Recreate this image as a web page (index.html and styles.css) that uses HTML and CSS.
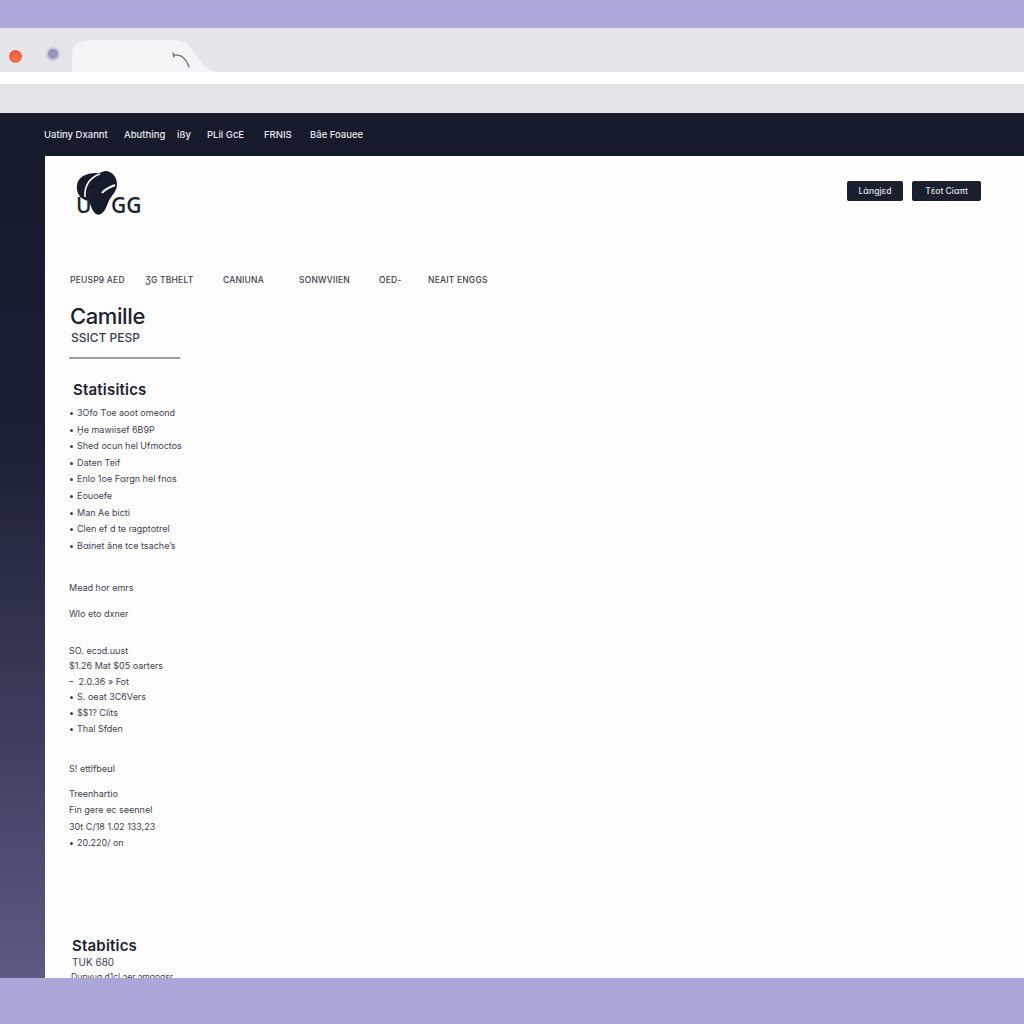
FILE: index.html
```html
<!DOCTYPE html>
<html>
	<head>
		<meta charset="utf-8">
		<title>Camille</title>
		<link rel="stylesheet" href="styles.css">
	</head>
	<body>
		<div class="band-top"></div>

		<div class="tab-bar">
			<span class="dot-red"></span>
			<span class="dot-gray"></span>
			<svg class="tab" width="150" height="32" viewBox="0 0 150 32">
				<path d="M0 32 V16 Q0 0 18 0 H104 Q112 0 118 7 L131 24 Q137 31 146 32 Z" fill="#f5f5f8"/>
				<path d="M101 13 L102 17 M102 15 Q113 14 117 27" fill="none" stroke="#6f6f78" stroke-width="1.3" stroke-linecap="round"/>
			</svg>
		</div>
		<div class="strip"></div>
		<div class="address-bar"></div>

		<div class="app">
			<div class="topbar">
				<span class="top-link w1">Uatiny Dxannt</span>
				<span class="top-link w2">Abuthing</span>
				<span class="top-link w3">ißy</span>
				<span class="top-link w4">PLil GcE</span>
				<span class="top-link w5">FRNIS</span>
				<span class="top-link w6">Bâe Foauee</span>
			</div>
			<div class="app-body">
				<div class="rail"></div>
				<div class="panel">
					<div class="head-row">
						<svg class="logo" width="76" height="54" viewBox="0 0 76 54">
							<path d="M24 43 C20 41 20 35 16 30 C8 28 4 22 5 14 C6 6 14 2 24 2 C27 3 29 1 33 0 C40 0 45 6 45 13 C45 20 40 24 38 28 C35 32 35 38 30 42 C28 44 26 44 24 43 Z" fill="#161b2b"/>
							<path d="M13 26 C12 15 18 6 28 3" fill="none" stroke="#fff" stroke-width="1.6"/>
							<path d="M30 22 C33 18 38 16 43 14" fill="none" stroke="#fff" stroke-width="2"/>
							<text x="4" y="42" class="logo-text">U</text>
							<text x="39" y="42" class="logo-text">GG</text>
						</svg>
						<div class="head-btns">
							<span class="btn btn-a">Lάnɡjεd</span>
							<span class="btn btn-b">Tέοt Ciαπt</span>
						</div>
					</div>

					<div class="subnav">
						<span class="sub-link s1">PEUSP9 AED</span>
						<span class="sub-link s2">ƷG TBHELT</span>
						<span class="sub-link s3">CANIUNA</span>
						<span class="sub-link s4">SONWVIIEN</span>
						<span class="sub-link s5">OED-</span>
						<span class="sub-link s6">NEAIT ENGGS</span>
					</div>

					<h1 class="name">Camille</h1>
					<div class="name-sub">SSICT PESP</div>
					<div class="rule"></div>

					<h2 class="section-title">Statisitics</h2>
					<ul class="stat-list">
						<li>3Ofo Tᴏe aoot omeond</li>
						<li>Ḫe mawiisef 6B9P</li>
						<li>Shed ocun hel Ufmoctos</li>
						<li>Daten Tɐif</li>
						<li>Enlo 1oe Fαrgn hel fnos</li>
						<li>Eouoefe</li>
						<li>Man Ae bicti</li>
						<li>Clen ef d te ɾagptotrel</li>
						<li>Bαinet &#226;ne tce tsacheʼs</li>
					</ul>

					<p class="plain g1">Mead hor emrs</p>
					<p class="plain g2">Wlo eto dxner</p>

					<div class="plain-block g3">
						<p class="plain">SO. ecɔd.uust</p>
						<p class="plain">$1.26 Mat $05 oarters</p>
						<p class="plain">–&nbsp; 2.0.36 » Fot</p>
						<p class="plain dotted">S. oeat 3C6Vers</p>
						<p class="plain dotted">$$1? Clits</p>
						<p class="plain dotted">Thal Sfden</p>
					</div>

					<p class="plain g4">S! ettlfbeʊl</p>

					<div class="plain-block g5">
						<p class="plain">Treenhartio</p>
						<p class="plain">Fin gere ec seennel</p>
						<p class="plain">30t C/18 1.02 133,23</p>
						<p class="plain dotted">20.220/ on</p>
					</div>

					<h2 class="section-title bottom-title">Stabitics</h2>
					<p class="plain tuk">TUK 680</p>
					<p class="plain cut">Dupvuɑ d1cl ɔer ɔmɑoɑsr</p>
				</div>
			</div>
		</div>

		<div class="band-bottom"></div>
	</body>
</html>
```
FILE: styles.css
```css
html, body
{
	margin: 0px;
	padding: 0px;
	height: 1024px;
	overflow: hidden;
	background-color: #a9a9d7;
	font-family: Inter, "Open Sans", "Liberation Sans", sans-serif;
}

.band-top
{
	height: 28px;
	background-color: #abaadb;
}

.band-bottom
{
	height: 46px;
	background-color: #a9a8d8;
}

.tab-bar
{
	display: flex;
	align-items: flex-end;
	height: 44px;
	background-color: #e6e6ea;
}

.dot-red
{
	width: 13px;
	height: 13px;
	margin: 0px 0px 9px 9px;
	border-radius: 50%;
	background: radial-gradient(circle at 50% 70%, #fb7a3c, #ee4b3f);
}

.dot-gray
{
	width: 10px;
	height: 10px;
	margin: 0px 0px 11px 24px;
	border: 2px solid #c9c9dd;
	border-radius: 50%;
	background-color: #9695bd;
}

.tab
{
	display: block;
	margin-left: 12px;
}

.strip
{
	height: 12px;
	background-color: #ffffff;
}

.address-bar
{
	height: 29px;
	background-color: #e5e5e9;
}

.app
{
	height: 865px;
	overflow: hidden;
	display: flex;
	flex-direction: column;
}

.topbar
{
	display: flex;
	align-items: center;
	height: 43px;
	padding-left: 44px;
	background-color: #161b2b;
	flex-shrink: 0;
}

.top-link
{
	color: #e6e7ec;
	font-size: 9.5px;
	font-weight: 500;
	white-space: nowrap;
}

.w1 { width: 80px; }
.w2 { width: 53px; }
.w3 { width: 30px; }
.w4 { width: 57px; }
.w5 { width: 46px; }

.app-body
{
	display: flex;
	flex: 1;
	min-height: 0;
}

.rail
{
	width: 45px;
	flex-shrink: 0;
	background: linear-gradient(180deg, #151a2b 0%, #1c2035 35%, #3d3e5e 70%, #5b5b83 100%);
}

.panel
{
	flex: 1;
	padding-left: 24px;
	background-color: #fdfdfe;
	overflow: hidden;
}

.head-row
{
	display: flex;
	justify-content: space-between;
	height: 117px;
}

.logo
{
	display: block;
	margin: 15px 0px 0px 3px;
}

.logo-text
{
	font-family: "Open Sans", "Liberation Sans", sans-serif;
	font-size: 21px;
	font-weight: 600;
	fill: #1f2433;
}

.head-btns
{
	display: flex;
	gap: 9px;
	margin: 25px 43px 0px 0px;
}

.btn
{
	display: flex;
	align-items: center;
	justify-content: center;
	height: 20px;
	border-radius: 2px;
	background-color: #1a1f2e;
	color: #dfe0e6;
	font-size: 8.5px;
	font-weight: 500;
}

.btn-a { width: 56px; }
.btn-b { width: 69px; }

.subnav
{
	display: flex;
	align-items: center;
	height: 14px;
	padding-left: 1px;
}

.sub-link
{
	color: #3c404c;
	font-size: 8.5px;
	font-weight: 500;
	letter-spacing: 0.2px;
	white-space: nowrap;
}

.s1 { width: 75px; }
.s2 { width: 78px; }
.s3 { width: 76px; }
.s4 { width: 80px; }
.s5 { width: 49px; }

.name
{
	margin: 16px 0px 0px 1px;
	color: #1d2130;
	font-size: 22px;
	font-weight: 500;
	line-height: 26px;
	letter-spacing: -0.4px;
}

.name-sub
{
	margin: 2px 0px 0px 2px;
	color: #3c404c;
	font-size: 12px;
	font-weight: 500;
	line-height: 14px;
}

.rule
{
	width: 111px;
	height: 2px;
	margin-top: 12px;
	background-color: #9c9ca8;
}

.section-title
{
	margin: 21px 0px 0px 4px;
	color: #1d2130;
	font-size: 15px;
	font-weight: 600;
	line-height: 20px;
	letter-spacing: 0.2px;
}

.stat-list
{
	list-style: none;
	margin: 5px 0px 0px 0px;
	padding: 0px;
}

.stat-list li, .dotted
{
	position: relative;
	padding-left: 8px;
}

.stat-list li
{
	color: #3f424d;
	font-size: 9px;
	line-height: 16.6px;
	white-space: nowrap;
}

.stat-list li::before, .dotted::before
{
	content: "";
	position: absolute;
	left: 1px;
	top: 7px;
	width: 3px;
	height: 3px;
	border-radius: 50%;
	background-color: #3f424d;
}

.plain
{
	margin: 0px;
	color: #3f424d;
	font-size: 9px;
	line-height: 15.6px;
	white-space: nowrap;
}

.g1 { margin-top: 26px; }
.g2 { margin-top: 10px; }
.g3 { margin-top: 21px; }
.g4 { margin-top: 25px; }
.g5 { margin-top: 9px; }

.g5 .plain
{
	line-height: 16.5px;
}

.bottom-title
{
	margin: 84px 0px 0px 3px;
}

.tuk
{
	margin: -1px 0px 0px 3px;
	font-size: 10px;
}

.cut
{
	margin: 0px 0px 0px 2px;
	font-size: 8.5px;
}
```
